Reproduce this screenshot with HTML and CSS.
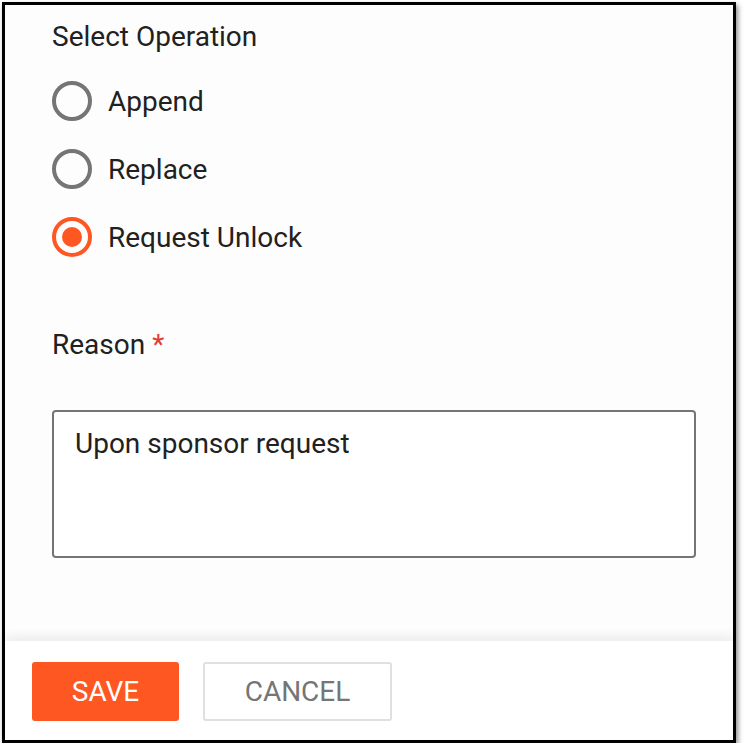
FILE: index.html
```html
<!DOCTYPE html>
<html>
<head>
<meta charset="utf-8">
<link rel="stylesheet" href="styles.css">
</head>
<body>
<div class="frame">
  <div class="content">
    <div class="title">Select Operation</div>
    <div class="radios">
      <label class="radio"><span class="circle"></span><span class="rlabel">Append</span></label>
      <label class="radio"><span class="circle"></span><span class="rlabel">Replace</span></label>
      <label class="radio checked"><span class="circle"><span class="dot"></span></span><span class="rlabel">Request Unlock</span></label>
    </div>
    <div class="reason">Reason <span class="req">*</span></div>
    <div class="textarea">Upon sponsor request</div>
  </div>
  <div class="footer">
    <button class="btn save">SAVE</button>
    <button class="btn cancel">CANCEL</button>
  </div>
</div>
</body>
</html>
```
FILE: styles.css
```css
html, body {
  margin: 0;
  padding: 0;
  background: #ffffff;
}
body {
  font-family: Roboto, "Liberation Sans", sans-serif;
  color: #212121;
}
.frame {
  margin: 2px 0 0 2px;
  width: 728px;
  height: 735px;
  border: 3px solid #000;
  box-shadow: 2px 3px 5px rgba(0,0,0,0.45);
  display: flex;
  flex-direction: column;
  background: #fff;
}
.content {
  flex: 1;
  padding: 12px 37px 0 47px;
  background: #fdfdfd;
}
.title {
  font-size: 28px;
  line-height: 40px;
}
.radios {
  margin-top: 10px;
  display: flex;
  flex-direction: column;
}
.radio {
  height: 68px;
  display: flex;
  align-items: center;
  gap: 16px;
}
.circle {
  box-sizing: border-box;
  width: 40px;
  height: 40px;
  border: 4px solid #757575;
  border-radius: 50%;
  display: flex;
  align-items: center;
  justify-content: center;
}
.checked .circle {
  border-color: #ff5722;
}
.dot {
  width: 20px;
  height: 20px;
  border-radius: 50%;
  background: #ff5722;
}
.rlabel {
  font-size: 28px;
}
.reason {
  margin-top: 54px;
  font-size: 28px;
  line-height: 40px;
}
.req {
  color: #e53935;
}
.textarea {
  margin-top: 45px;
  box-sizing: border-box;
  height: 148px;
  border: 2px solid #757575;
  border-radius: 4px;
  padding: 16px 21px;
  font-size: 28px;
  line-height: 32px;
  background: #fff;
}
.footer {
  height: 99px;
  box-sizing: border-box;
  padding: 21px 0 0 27px;
  display: flex;
  gap: 24px;
  align-items: flex-start;
  background: #fff;
  box-shadow: 0 -5px 10px rgba(0,0,0,0.07);
  position: relative;
}
.btn {
  height: 59px;
  font-family: Roboto, "Liberation Sans", sans-serif;
  font-size: 28px;
  border-radius: 3px;
  padding: 0;
}
.save {
  width: 147px;
  background: #ff5722;
  color: #fff;
  border: none;
}
.cancel {
  width: 189px;
  background: #fff;
  color: #757575;
  border: 2px solid #e0e0e0;
}
```
